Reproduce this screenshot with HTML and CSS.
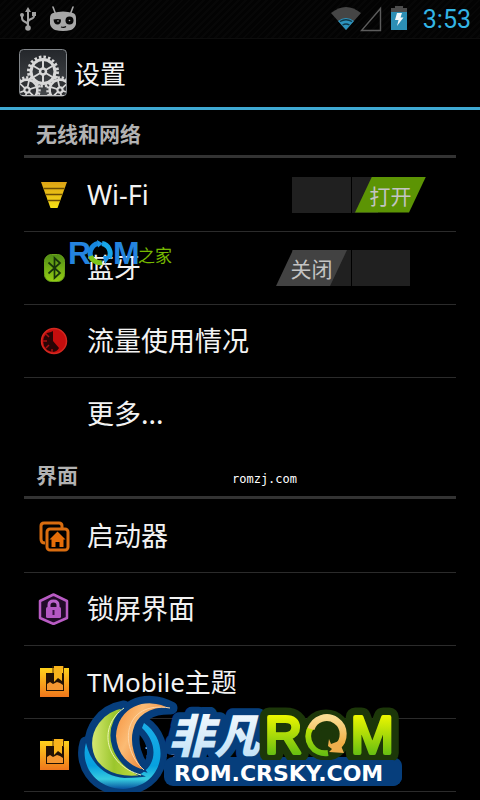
FILE: index.html
```html
<!DOCTYPE html>
<html lang="zh-CN">
<head>
<meta charset="utf-8">
<meta name="viewport" content="width=device-width, initial-scale=1">
<title>设置</title>
<link rel="stylesheet" href="styles.css">
</head>
<body>
<div class="status">
  <div class="status-group">
    <svg width="18" height="26" viewBox="0 0 18 26" fill="none" stroke="#a3a3a3" stroke-width="2">
      <path d="M9 4v18M9 19c0-4-6-2-6-7v-2M9 16c0-4 6-2 6-6V8"/>
      <path d="M9 1l3 5H6z" fill="#a3a3a3" stroke="none"/>
      <circle cx="9" cy="22" r="2.800" fill="#a3a3a3" stroke="none"/>
      <circle cx="3" cy="9" r="2" fill="#a3a3a3" stroke="none"/>
      <path d="M13 6h4v4h-4z" fill="#a3a3a3" stroke="none"/>
    </svg>
    <svg width="28" height="26" viewBox="0 0 28 26">
      <path d="M4 1l3 8M24 1l-3 8" stroke="#a8a8a8" stroke-width="1.600" stroke-linecap="round"/>
      <path d="M4 7Q14 4 24 7Q27 8 27 12V18Q26 22 22 24Q14 26 6 24Q2 22 1 18V12Q1 8 4 7z" fill="#a8a8a8"/>
      <path d="M4.500 13.500q4.500-1 7.500 0q0 5-3.500 5t-4-5z" fill="#080808"/>
      <circle cx="20.500" cy="14.500" r="4" fill="#080808"/>
      <circle cx="9" cy="15" r=".8" fill="#aaa"/><circle cx="20.500" cy="14.500" r=".8" fill="#aaa"/>
      <path d="M12 21q3 1 5-.5" fill="none" stroke="#080808" stroke-width="1.200"/>
    </svg>
  </div>
  <div class="status-group status-right">
    <svg width="92" height="28" viewBox="330 5 92 28">
      <path d="M331 13Q346 1 361 13L346 30z" fill="#454545"/>
      <path d="M338 21Q346 15 354 21L346 30z" fill="#2c93bd"/>
      <path d="M340 21.500q6-3.500 12 0M342.500 25q3.500-2 7 0" fill="none" stroke="#103848" stroke-width="1.400"/>
      <path d="M361.500 30.500H380.500V8.500z" fill="none" stroke="#5c5c5c" stroke-width="1.400"/>
      <path d="M395 6h8v2h4v6h-16V8h4z" fill="#4c4c4c"/>
      <path d="M391 12h16v18h-16z" fill="#2c8fb5"/>
      <path d="M397 13h5l-1.500 4.500h3L397 26l1.500-6H395z" fill="#f1f8fa"/>
    </svg>
    <time class="clock">3:53</time>
  </div>
</div>

<header class="title-bar">
  <svg width="48" height="48" viewBox="0 0 48 48">
    <defs>
      <linearGradient id="tile" x2="0" y2="1"><stop stop-color="#24272b"/><stop offset="1" stop-color="#45484b"/></linearGradient>
      <linearGradient id="steel" x2="0" y2="1"><stop stop-color="#efefef"/><stop offset="1" stop-color="#c0c0c0"/></linearGradient>
      <clipPath id="tileclip"><rect x="1" y="1" width="46" height="45" rx="4"/></clipPath>
      <g id="gear" fill="none" stroke="#d8d8d8">
        <circle r="14.500" stroke-width="3" stroke-dasharray="2.500 2.056"/>
        <circle r="12" stroke-width="3"/>
        <circle r="3" stroke-width="2.500"/>
        <path d="M0-3V-11M0 3V11M2.600-1.500L9.500-5.500M2.600 1.500L9.500 5.500M-2.600-1.500L-9.500-5.500M-2.600 1.500L-9.500 5.500" stroke-width="2"/>
      </g>
    </defs>
    <rect x=".5" y=".5" width="47" height="46.500" rx="4" fill="url(#tile)" stroke="#82868a"/>
    <g clip-path="url(#tileclip)">
      <use href="#gear" transform="translate(24 22.500)"/>
      <circle cx="8" cy="41" r="11" fill="#303235"/><circle cx="41" cy="41" r="11" fill="#303235"/>
      <use href="#gear" transform="translate(8 41) rotate(12) scale(.86)"/>
      <use href="#gear" transform="translate(41 41) rotate(-12) scale(.86)"/>
    </g>
    <path d="M3 46.500h42" stroke="#c0c0c0"/>
  </svg>
  <h1 class="title">设置</h1>
</header>

<main class="settings">
  <section>
    <h2 class="section-title">无线和网络</h2>
    <ul class="list">
      <li class="row">
        <svg class="icon" viewBox="0 0 32 32">
          <defs><linearGradient id="gold" x2="0" y2="1"><stop stop-color="#dda315"/><stop offset="1" stop-color="#f7df16"/></linearGradient></defs>
          <path d="M3 3h26l-9.500 26h-7z" fill="url(#gold)"/>
          <path d="M5.500 9.500h21M7.500 15.500h17M10 21.500h12" stroke="#6b4c04" stroke-width="1.300"/>
        </svg>
        <a class="label latin" href="#wifi">Wi-Fi</a>
        <label class="switch"><input type="checkbox" role="switch" aria-label="Wi-Fi" checked><span class="track"></span><span class="thumb">打开</span></label>
      </li>
      <li class="row">
        <svg class="icon" viewBox="0 0 32 32">
          <defs><linearGradient id="lime" x2="0" y2="1"><stop stop-color="#4f8d16"/><stop offset="1" stop-color="#95cd13"/></linearGradient></defs>
          <rect x="6.500" y="2.500" width="20" height="27" rx="7" fill="url(#lime)" stroke="#6ba31a"/>
          <path d="M10.500 10.500L22 21l-5.500 5V6L22 11 10.500 21.500" fill="none" stroke="#17330a" stroke-width="1.700"/>
        </svg>
        <a class="label" href="#bluetooth">蓝牙</a>
        <label class="switch"><input type="checkbox" role="switch" aria-label="蓝牙"><span class="track"></span><span class="thumb">关闭</span></label>
      </li>
      <li class="row">
        <svg class="icon" viewBox="0 0 32 32">
          <circle cx="16" cy="16" r="12.500" fill="#c40d0d" stroke="#d32820" stroke-width="1.500"/>
          <path d="M15 6v10l6 7q-2 4-7 4l-5-2-3-4-1-5 1-4 3-4 4-1z" fill="#280405"/>
          <path d="M8 9l3 3M5 16h4M8 23l3-3M14 27v-3" stroke="#a51010" stroke-width="1.500"/>
        </svg>
        <a class="label" href="#data">流量使用情况</a>
      </li>
      <li class="row">
        <span class="icon"></span>
        <a class="label" href="#more">更多...</a>
      </li>
    </ul>
  </section>
  <section>
    <h2 class="section-title">界面</h2>
    <ul class="list list-last">
      <li class="row">
        <svg class="icon" viewBox="0 0 32 32" fill="none" stroke="#d96d10" stroke-width="3">
          <path d="M7 23q-4 0-4-4V6q0-3 3-3h15q3 0 3 3v2"/>
          <rect x="9" y="9" width="21" height="21" rx="3"/>
          <path d="M19.500 11.500l8 8h-2V27h-4v-5h-4v5h-4v-7.500h-2z" fill="#e56d08" stroke="none"/>
        </svg>
        <a class="label" href="#launcher">启动器</a>
      </li>
      <li class="row">
        <svg class="icon" viewBox="0 0 32 32">
          <path d="M15.500 1.500L29 8v17l-13.500 6L2 25V8z" fill="#210b28" stroke="#b95bc4" stroke-width="2.500" stroke-linejoin="round"/>
          <path d="M11 15v-3q0-4 4.500-4t4.500 4v3" fill="none" stroke="#bb63cb" stroke-width="3"/>
          <rect x="8" y="14" width="15" height="11" rx="1.500" fill="#b458c3"/>
          <path d="M15.500 17v5" stroke="#391043" stroke-width="2"/>
        </svg>
        <a class="label" href="#lockscreen">锁屏界面</a>
      </li>
      <li class="row">
        <svg class="icon" viewBox="0 0 32 32">
          <defs>
            <linearGradient id="amber" x2="0" y2="1"><stop stop-color="#ffd21c"/><stop offset="1" stop-color="#ef761c"/></linearGradient>
            <g id="theme">
              <path d="M2 2h29v29H2z" fill="url(#amber)"/>
              <path d="M8 7h18v18H8z" fill="#211104"/>
              <path d="M16 0h9v3h-1v12l-4-3-4 4z" fill="#f9b41c"/>
              <path d="M9 18l3-2 3 2 4-2 3 1 3 2v5H9z" fill="#f49732"/>
              <path d="M15 0v7M25.500 0v8" stroke="#5c3204"/>
            </g>
          </defs>
          <use href="#theme"/>
        </svg>
        <a class="label latin mixed" href="#tmobile">TMobile主题</a>
      </li>
      <li class="row">
        <svg class="icon" viewBox="0 0 32 32"><use href="#theme"/></svg>
        <a class="label covered" href="#theme-chooser">主题</a>
      </li>
    </ul>
  </section>
</main>

<svg class="mark mark-home" width="130" height="48" viewBox="56 230 130 48">
  <text x="68" y="264" class="home-rom">R</text>
  <text x="113" y="264" class="home-rom">M</text>
  <g fill="none" stroke-width="5">
    <path d="M98 243.500A10 10 0 0 0 92 259" stroke="#1686df"/>
    <path d="M102 243.500A10 10 0 0 1 109 258" stroke="#18a7e8"/>
    <path d="M90.500 256A10 10 0 0 0 102 262.500" stroke="#7cc51c"/>
  </g>
  <path d="M97 240l6 3.500-5 4zM103 256h8l-6 8z" fill="#1c94e8"/>
  <text x="138" y="262" class="home-cn">之家</text>
</svg>

<p class="mark mark-url">romzj.com</p>

<svg class="mark mark-crsky" width="340" height="110" viewBox="70 690 340 110">
  <defs>
    <linearGradient id="ring" x2="0" y2="1"><stop stop-color="#1aaee8"/><stop offset=".65" stop-color="#07a0df"/><stop offset=".85" stop-color="#37ccdf"/><stop offset="1" stop-color="#07509e"/></linearGradient>
    <linearGradient id="leaf"><stop stop-color="#d8ea75"/><stop offset=".45" stop-color="#9bc62d"/><stop offset="1" stop-color="#c9df42"/></linearGradient>
    <linearGradient id="flame" y2=".6"><stop stop-color="#f58d36"/><stop offset=".4" stop-color="#fbbb74"/><stop offset="1" stop-color="#e26b1c"/></linearGradient>
    <linearGradient id="ice" x2="0" y2="1"><stop stop-color="#fff"/><stop offset="1" stop-color="#b9def6"/></linearGradient>
    <linearGradient id="fresh" gradientUnits="userSpaceOnUse" x1="0" y1="716" x2="0" y2="756"><stop stop-color="#eaf500"/><stop offset="1" stop-color="#62bd12"/></linearGradient>
    <linearGradient id="honey" x2="0" y2="1"><stop stop-color="#f9dc91"/><stop offset="1" stop-color="#efa93b"/></linearGradient>
    <path id="s1" d="M144 723C172 742 164 787 123 789C93 788 80 763 86 743C91 765 106 777 125 778C154 777 163 748 142 728z"/>
    <path id="s2" d="M124 707C78 715 77 784 142 776C115 765 99 734 124 707z"/>
    <path id="s3" d="M171 708C145 694 116 707 115 736C116 755 128 767 145 771C126 748 126 707 171 708z"/>
  </defs>
  <g fill="#063e7c" stroke="#063e7c" stroke-width="13" stroke-linejoin="round"><use href="#s1"/><use href="#s2"/><use href="#s3"/></g>
  <rect x="164" y="757" width="238" height="29" rx="9" fill="#063e7c"/>
  <use href="#s1" fill="url(#ring)"/>
  <use href="#s2" fill="url(#leaf)" stroke="#063e7c" stroke-width="2"/>
  <use href="#s3" fill="url(#flame)" stroke="#063e7c" stroke-width="2"/>
  <path d="M124 708C97 727 105 765 141 775" fill="none" stroke="#eef5b6"/>
  <path d="M170 708C123 700 118 747 144 770" fill="none" stroke="#fdd4a4"/>
  <text x="168" y="753" class="crsky-cn">非凡</text>
  <g class="crsky-halo"><text x="265" y="753">R</text><text x="351" y="753">M</text><circle cx="326" cy="735" r="16"/></g>
  <rect x="200" y="760" width="202" height="26" rx="9" fill="#063e7c"/>
  <g class="crsky-rom"><text x="265" y="753">R</text><text x="351" y="753">M</text></g>
  <path d="M311 727A17 17 0 0 0 328 753" fill="none" stroke="url(#fresh)" stroke-width="6"/>
  <path d="M311 729A16.500 16.500 0 1 1 337 747" fill="none" stroke="url(#honey)" stroke-width="7"/>
  <path d="M329 739l2 5 8-3 5 12-15-1 3-3-4-3z" fill="#eeae4c"/>
  <text x="174" y="781" class="crsky-url">ROM.CRSKY.COM</text>
</svg>
</body>
</html>
```
FILE: styles.css
```css
* {
  box-sizing: border-box;
}

body {
  margin: 0;
  position: relative;
  background: #000;
  color: #f3f3f3;
  font-family: "Noto Sans CJK SC", "Noto Sans", sans-serif;
  overflow-x: hidden;
}

svg {
  display: block;
  flex: none;
}

.status {
  display: flex;
  align-items: center;
  justify-content: space-between;
  height: 39px;
  padding: 0 9px 0 19px;
  background: repeating-linear-gradient(135deg, #030303 0 3px, #070707 3px 5px);
  border-bottom: 1px solid #0d0d0d;
}

.status-group {
  display: flex;
  align-items: center;
  gap: 12px;
}

.status-right {
  gap: 1px;
}

.clock {
  font-family: Roboto, sans-serif;
  font-size: 25px;
  line-height: 36px;
  padding-top: 2px;
  color: #33b5e5;
}

.title-bar {
  display: flex;
  align-items: center;
  gap: 7px;
  height: 71px;
  padding: 0 19px;
  border-bottom: 3px solid #3fa9d3;
}

.title {
  margin: 0;
  font-size: 26px;
  font-weight: 400;
  line-height: 36px;
}

.settings {
  padding: 0 24px;
}

.section-title {
  margin: 0;
  height: 48px;
  padding: 0 12px;
  font-size: 21px;
  font-weight: 700;
  line-height: 46px;
  color: #b2b2b2;
  border-bottom: 3px solid #333;
}

.list {
  margin: 0;
  padding: 0 0 1px;
  list-style: none;
}

.list-last {
  padding: 0;
  border-bottom: 1px solid #2b2b2b;
}

.row {
  display: flex;
  align-items: center;
  height: 73px;
  padding: 0 30px 0 14px;
}

.row + .row {
  border-top: 1px solid #2b2b2b;
}

.icon {
  width: 32px;
  height: 32px;
  margin-right: 17px;
}

.label {
  flex: 1;
  padding-bottom: 2px;
  font-size: 27px;
  line-height: 36px;
  color: inherit;
  text-decoration: none;
}

.latin {
  padding-bottom: 0;
  font-family: "Noto Sans", "Noto Sans CJK SC", sans-serif;
}

.mixed {
  font-size: 26px;
}

.covered {
  padding-left: 56px;
}

.switch {
  display: grid;
  align-items: center;
  width: 150px;
  height: 36px;
}

.switch > * {
  grid-area: 1 / 1;
}

.switch input {
  width: 100%;
  height: 100%;
  margin: 0;
  opacity: 0;
}

.track {
  height: 36px;
  margin: 0 16px;
  background: linear-gradient(90deg, #202020 0 59px, #000 59px 60px, #202020 60px);
}

.thumb {
  justify-self: start;
  width: 71px;
  font-size: 21px;
  line-height: 36px;
  text-align: center;
  color: #c4c4c4;
  background: #424242;
  clip-path: polygon(17px 0, 100% 0, calc(100% - 17px) 100%, 0 100%);
}

.switch input:checked ~ .track {
  background: linear-gradient(90deg, #202020 0 59px, #000 59px 60px, #202020 60px 86px, #000 86px);
}

.switch input:checked ~ .thumb {
  justify-self: end;
  background: #5c9404;
}

.mark {
  position: absolute;
  pointer-events: none;
}

.mark-home {
  left: 56px;
  top: 230px;
}

.home-rom {
  font: 700 32px "Liberation Sans", sans-serif;
  fill: #2484df;
}

.home-cn {
  font: 400 17px "Noto Sans CJK SC", sans-serif;
  fill: #76b900;
}

.mark-url {
  left: 232px;
  top: 471px;
  margin: 0;
  font: 12px/16px "DejaVu Sans Mono", monospace;
  color: #fff;
}

.mark-crsky {
  left: 70px;
  top: 690px;
}

.crsky-cn {
  font: italic 900 46px "Noto Sans CJK SC", sans-serif;
  fill: url(#ice);
  stroke: #063e7c;
  stroke-width: 14px;
  stroke-linejoin: round;
  paint-order: stroke;
}

.crsky-halo,
.crsky-rom {
  font: 400 51px "Liberation Sans", sans-serif;
  stroke-linejoin: round;
}

.crsky-halo {
  fill: #1c3709;
  stroke: #1c3709;
  stroke-width: 19px;
}

.crsky-rom {
  fill: url(#fresh);
  stroke: url(#fresh);
  stroke-width: 4px;
}

.crsky-url {
  font: 700 22px "DejaVu Sans", sans-serif;
  fill: #fff;
}
```
